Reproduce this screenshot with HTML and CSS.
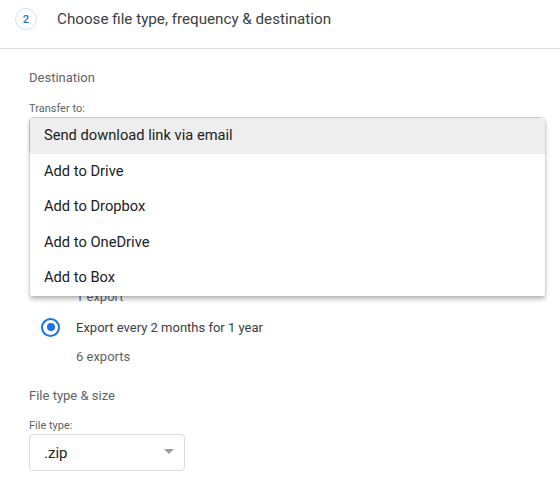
FILE: index.html
```html
<!DOCTYPE html>
<html>
<head>
<meta charset="utf-8">
<link rel="stylesheet" href="styles.css">
</head>
<body>
<div class="header">
  <div class="step">2</div>
  <div class="title">Choose file type, frequency &amp; destination</div>
</div>
<div class="content">
  <div class="section-title">Destination</div>
  <div class="field-label">Transfer to:</div>
  <div class="transfer-wrap">
    <div class="select wide"><span></span><span class="arrow"></span></div>
    <div class="menu">
      <div class="menu-item active">Send download link via email</div>
      <div class="menu-item">Add to Drive</div>
      <div class="menu-item">Add to Dropbox</div>
      <div class="menu-item">Add to OneDrive</div>
      <div class="menu-item">Add to Box</div>
    </div>
  </div>
  <div class="section-title freq"></div>
  <div class="radio-row"><span class="radio"></span></div>
  <div class="sub">1 export</div>
  <div class="radio-row"><span class="radio checked"></span><span class="radio-text">Export every 2 months for 1 year</span></div>
  <div class="sub">6 exports</div>
  <div class="section-title filetype">File type &amp; size</div>
  <div class="field-label ft">File type:</div>
  <div class="select small"><span>.zip</span><span class="arrow"></span></div>
</div>
</body>
</html>
```
FILE: styles.css
```css
html, body {
  margin: 0;
  padding: 0;
  background: #ffffff;
}
body {
  font-family: Roboto, "Liberation Sans", Arial, sans-serif;
  color: #3c4043;
  width: 560px;
  overflow: hidden;
}
.header {
  display: flex;
  align-items: center;
  height: 22px;
  padding: 8px 0 18px 15px;
  border-bottom: 1px solid #dadce0;
}
.step {
  width: 20px;
  height: 20px;
  border: 1px solid #d2e3fc;
  border-radius: 50%;
  color: #1a73e8;
  font-size: 11px;
  font-weight: 500;
  display: flex;
  align-items: center;
  justify-content: center;
}
.title {
  margin-left: 20px;
  font-size: 15.2px;
  color: #3c4043;
}
.content {
  padding: 0 0 0 29px;
}
.section-title {
  font-size: 13px;
  line-height: 20px;
  height: 20px;
  color: #5f6368;
  margin-top: 19px;
}
.field-label {
  font-size: 11px;
  line-height: 16px;
  color: #5f6368;
  margin-top: 13px;
}
.field-label.ft { margin-top: 12px; }
.transfer-wrap {
  position: relative;
  height: 37px;
}
.select {
  box-sizing: border-box;
  height: 37px;
  border: 1px solid #dadce0;
  border-radius: 4px;
  display: flex;
  align-items: center;
  justify-content: space-between;
  padding: 0 10px 0 14px;
  font-size: 15px;
  color: #202124;
}
.select.wide { width: 515px; }
.select.small { width: 156px; }
.arrow {
  width: 0;
  height: 0;
  border-left: 5px solid transparent;
  border-right: 5px solid transparent;
  border-top: 5px solid #9e9e9e;
  margin-top: -3px;
}
.menu {
  position: absolute;
  left: 1px;
  top: 1px;
  width: 515px;
  background: #ffffff;
  border-radius: 2px;
  box-shadow: 0 3px 5px rgba(0,0,0,0.28), 0 0 2px rgba(0,0,0,0.18);
  z-index: 2;
}
.menu-item {
  height: 35.5px;
  line-height: 35.5px;
  padding-left: 14px;
  font-size: 14.7px;
  color: #202124;
}
.menu-item.active {
  background: #eeeeee;
}
.section-title.freq { margin-top: 73px; }
.radio-row {
  display: flex;
  align-items: center;
  height: 20px;
  margin-top: 10px;
  padding-left: 12px;
}
.radio {
  box-sizing: border-box;
  width: 19px;
  height: 19px;
  border: 2px solid #5f6368;
  border-radius: 50%;
  position: relative;
}
.radio.checked { border-color: #1a73e8; }
.radio.checked::after {
  content: "";
  position: absolute;
  left: 3.5px;
  top: 3.5px;
  width: 8px;
  height: 8px;
  border-radius: 50%;
  background: #1a73e8;
}
.radio-text {
  margin-left: 16px;
  font-size: 13px;
  color: #3c4043;
}
.sub {
  padding-left: 47px;
  font-size: 13px;
  line-height: 20px;
  margin-top: 10px;
  color: #5f6368;
}
.section-title.filetype { margin-top: 19px; }
```
